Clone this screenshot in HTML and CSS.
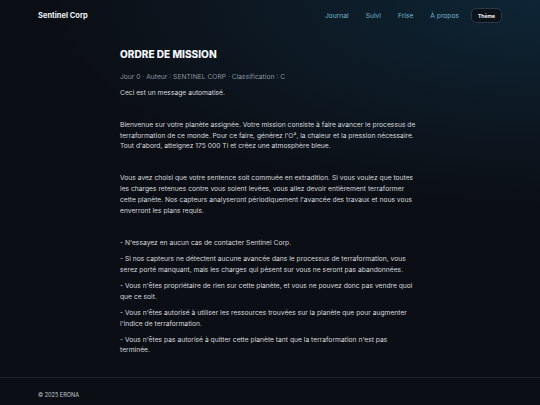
FILE: index.html
```html
<!DOCTYPE html>
<html lang="fr">
<head>
    <meta charset="UTF-8">
    <meta name="viewport" content="width=device-width, initial-scale=1.0">
    <title>Ordre de mission - Sentinel Corp</title>
    <link rel="stylesheet" href="styles.css">
</head>
<body>
    <header class="topbar">
        <a href="/" class="brand">Sentinel Corp</a>
        <nav class="nav">
            <a href="#">Journal</a>
            <a href="#">Suivi</a>
            <a href="#">Frise</a>
            <a href="#">À propos</a>
            <button class="theme-btn">Thème</button>
        </nav>
    </header>
    <main class="mission">
        <h1>ORDRE DE MISSION</h1>
        <p class="meta">Jour 0 · Auteur : SENTINEL CORP · Classification : C</p>
        <p>Ceci est un message automatisé.</p>
        <p class="block">Bienvenue sur votre planète assignée. Votre mission consiste à faire avancer le processus de terraformation de ce monde. Pour ce faire, générez l'O², la chaleur et la pression nécessaire. Tout d'abord, atteignez 175 000 Ti et créez une atmosphère bleue.</p>
        <p class="block">Vous avez choisi que votre sentence soit commuée en extradition. Si vous voulez que toutes les charges retenues contre vous soient levées, vous allez devoir entièrement terraformer cette planète. Nos capteurs analyseront périodiquement l'avancée des travaux et nous vous enverront les plans requis.</p>
        <div class="rules">
            <p>- N'essayez en aucun cas de contacter Sentinel Corp.</p>
            <p>- Si nos capteurs ne détectent aucune avancée dans le processus de terraformation, vous serez porté manquant, mais les charges qui pèsent sur vous ne seront pas abandonnées.</p>
            <p>- Vous n'êtes propriétaire de rien sur cette planète, et vous ne pouvez donc pas vendre quoi que ce soit.</p>
            <p>- Vous n'êtes autorisé à utiliser les ressources trouvées sur la planète que pour augmenter l'indice de terraformation.</p>
            <p>- Vous n'êtes pas autorisé à quitter cette planète tant que la terraformation n'est pas terminée.</p>
        </div>
    </main>
    <footer class="footer">© 2025 ERONA</footer>
</body>
</html>
```

FILE: styles.css
```css
html {
    background-color: #0b0e14;
}
body {
    margin: 0;
    min-height: 100vh;
    display: flex;
    flex-direction: column;
    font-family: Inter, "Noto Sans", sans-serif;
    color: #d6d9de;
    background: radial-gradient(ellipse 500px 210px at 100% 0%, #0e2535 0%, rgba(11, 14, 20, 0) 100%), #0b0e14;
}
.topbar {
    display: flex;
    align-items: center;
    justify-content: space-between;
    height: 31px;
    padding: 0 38px;
}
.brand {
    color: #eef1f5;
    font-size: 7.5px;
    font-weight: 700;
    text-decoration: none;
}
.nav {
    display: flex;
    align-items: center;
    gap: 17px;
}
.nav a {
    color: #74b4cc;
    font-size: 6.7px;
    text-decoration: none;
}
.theme-btn {
    margin-left: -5px;
    width: 31px;
    height: 15px;
    padding: 0;
    border: 1px solid #2b3946;
    border-radius: 5px;
    background: #0b121a;
    color: #f2f4f7;
    font-family: inherit;
    font-size: 5px;
    font-weight: 700;
}
.mission {
    flex: 1;
    width: 300px;
    margin: 0 auto;
    padding: 16px 0 12px;
}
.mission h1 {
    margin: 0 0 11px;
    color: #f3f5f8;
    font-size: 10.1px;
    font-weight: 800;
    line-height: 14px;
}
.mission p {
    margin: 5.2px 0 0;
    font-size: 6.73px;
    line-height: 10.8px;
}
.mission .meta {
    margin: 0;
    color: #8b939d;
}
.mission .block {
    margin-top: 21px;
}
.rules {
    margin-top: 22px;
    padding-right: 5px;
}
.rules p:first-child {
    margin-top: 0;
}
.footer {
    border-top: 1px solid #1b212a;
    padding: 13px 38px 6px;
    color: #c5c9cf;
    font-size: 5.55px;
    line-height: 8px;
}
```
